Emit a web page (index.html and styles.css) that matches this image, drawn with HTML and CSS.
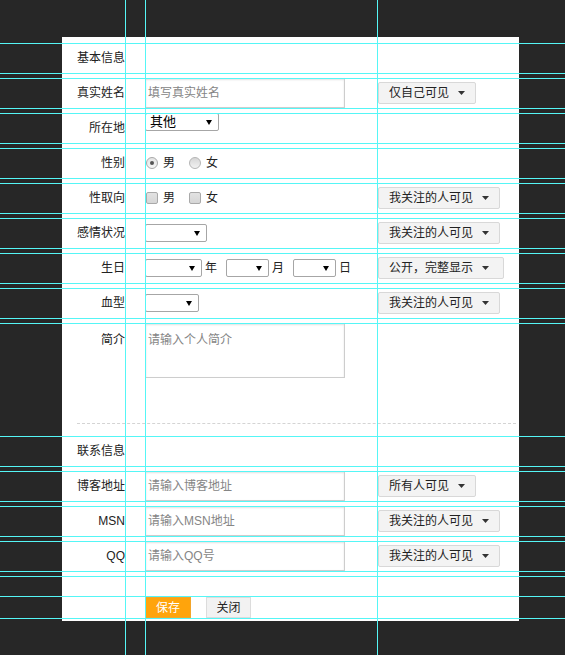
FILE: index.html
```html
<!DOCTYPE html>
<html lang="zh-CN">
<head>
<meta charset="utf-8">
<title>个人资料</title>
<link rel="stylesheet" href="styles.css">
</head>
<body>
<div class="page">
  <div class="panel">
    <div class="row"><div class="label">基本信息</div></div>

    <div class="row">
      <div class="label">真实姓名</div>
      <div class="field"><div class="input">填写真实姓名</div></div>
      <div class="vis">仅自己可见<svg class="caret" width="7" height="4" viewBox="0 0 7 4"><polygon points="0,0 7,0 3.5,4"/></svg></div>
    </div>

    <div class="row">
      <div class="label">所在地</div>
      <div class="field field-top"><div class="select sel-loc"><span>其他</span><span class="arrow"></span></div></div>
    </div>

    <div class="row">
      <div class="label">性别</div>
      <div class="field">
        <span class="radio on"></span><span class="opt">男</span>
        <span class="radio"></span><span class="opt">女</span>
      </div>
    </div>

    <div class="row">
      <div class="label">性取向</div>
      <div class="field">
        <span class="check"></span><span class="opt">男</span>
        <span class="check"></span><span class="opt">女</span>
      </div>
      <div class="vis">我关注的人可见<svg class="caret" width="7" height="4" viewBox="0 0 7 4"><polygon points="0,0 7,0 3.5,4"/></svg></div>
    </div>

    <div class="row">
      <div class="label">感情状况</div>
      <div class="field"><div class="select sel-emo"><span class="arrow"></span></div></div>
      <div class="vis">我关注的人可见<svg class="caret" width="7" height="4" viewBox="0 0 7 4"><polygon points="0,0 7,0 3.5,4"/></svg></div>
    </div>

    <div class="row">
      <div class="label">生日</div>
      <div class="field">
        <div class="select sel-year"><span class="arrow"></span></div><span class="unit">年</span>
        <div class="select sel-md"><span class="arrow"></span></div><span class="unit">月</span>
        <div class="select sel-md"><span class="arrow"></span></div><span class="unit">日</span>
      </div>
      <div class="vis vis-wide">公开，完整显示<svg class="caret" width="7" height="4" viewBox="0 0 7 4"><polygon points="0,0 7,0 3.5,4"/></svg></div>
    </div>

    <div class="row">
      <div class="label">血型</div>
      <div class="field"><div class="select sel-blood"><span class="arrow"></span></div></div>
      <div class="vis">我关注的人可见<svg class="caret" width="7" height="4" viewBox="0 0 7 4"><polygon points="0,0 7,0 3.5,4"/></svg></div>
    </div>

    <div class="row intro">
      <div class="label label-top">简介</div>
      <div class="field field-top"><div class="textarea">请输入个人简介</div></div>
    </div>

    <div class="divider"></div>

    <div class="row"><div class="label">联系信息</div></div>

    <div class="row">
      <div class="label">博客地址</div>
      <div class="field"><div class="input">请输入博客地址</div></div>
      <div class="vis">所有人可见<svg class="caret" width="7" height="4" viewBox="0 0 7 4"><polygon points="0,0 7,0 3.5,4"/></svg></div>
    </div>

    <div class="row">
      <div class="label">MSN</div>
      <div class="field"><div class="input">请输入MSN地址</div></div>
      <div class="vis">我关注的人可见<svg class="caret" width="7" height="4" viewBox="0 0 7 4"><polygon points="0,0 7,0 3.5,4"/></svg></div>
    </div>

    <div class="row">
      <div class="label">QQ</div>
      <div class="field"><div class="input">请输入QQ号</div></div>
      <div class="vis">我关注的人可见<svg class="caret" width="7" height="4" viewBox="0 0 7 4"><polygon points="0,0 7,0 3.5,4"/></svg></div>
    </div>

    <div class="row spacer"></div>

    <div class="row actions">
      <div class="label"></div>
      <div class="field field-bottom">
        <span class="btn btn-save">保存</span>
        <span class="btn btn-close">关闭</span>
      </div>
    </div>
  </div>
</div>

<div class="vguide vg-a"></div>
<div class="vguide vg-b"></div>
<div class="vguide vg-c"></div>
</body>
</html>
```

FILE: styles.css
```css
html, body {
  margin: 0;
  padding: 0;
}

body {
  width: 565px;
  height: 655px;
  overflow: hidden;
  position: relative;
  background: #272727;
  font-family: "Liberation Sans", "Noto Sans CJK SC", sans-serif;
  font-size: 12px;
  line-height: 16px;
  color: #222;
}

.page {
  padding: 37px 0 0 62px;
}

.panel {
  width: 457px;
  height: 584px;
  box-sizing: border-box;
  padding-top: 6px;
  background: #fff;
}

/* rows with guide lines */
.row {
  position: relative;
  display: flex;
  align-items: center;
  height: 30px;
  margin-bottom: 5px;
}

.row::before,
.row::after {
  content: "";
  position: absolute;
  left: -62px;
  width: 565px;
  height: 1px;
  background: #55f6f6;
  z-index: 3;
  top: 0;
}

.row::after {
  top: 30px;
}

.row.intro {
  height: 100px;
  margin-bottom: 0;
  align-items: flex-start;
}

.row.intro::after {
  display: none;
}

.row.spacer {
  height: 20px;
  margin-bottom: 0;
}

.row.spacer::after {
  top: 20px;
}

.row.actions {
  height: 22px;
  margin-bottom: 0;
}

.row.actions::after {
  top: 22px;
}

.label {
  flex: none;
  width: 63px;
  text-align: right;
  color: #222;
}

.label-top {
  padding-top: 9px;
}

.field {
  flex: none;
  width: 233px;
  margin-left: 20px;
  display: flex;
  align-items: center;
}

.field-top {
  align-self: flex-start;
}

.field-bottom {
  align-self: flex-end;
}

/* text inputs */
.input {
  width: 200px;
  height: 30px;
  box-sizing: border-box;
  border: 1px solid #cdcdcd;
  box-shadow: inset 0 1px 2px rgba(0, 0, 0, 0.12);
  padding-left: 2px;
  display: flex;
  align-items: center;
  color: #858585;
}

.textarea {
  width: 200px;
  height: 55px;
  box-sizing: border-box;
  border: 1px solid #cdcdcd;
  box-shadow: inset 0 1px 2px rgba(0, 0, 0, 0.12);
  padding: 8px 2px 0;
  color: #858585;
}

/* selects */
.select {
  height: 18px;
  box-sizing: border-box;
  border: 1px solid #a6a6a6;
  border-radius: 2px;
  background: #fff;
  display: flex;
  align-items: center;
  padding-left: 4px;
  font-size: 13px;
  color: #000;
}

.select .arrow {
  margin-left: auto;
  margin-right: 6px;
  width: 0;
  height: 0;
  border-left: 3px solid transparent;
  border-right: 3px solid transparent;
  border-top: 5px solid #000;
}

.sel-loc { width: 74px; }
.sel-emo { width: 62px; }
.sel-year { width: 57px; }
.sel-md { width: 43px; }
.sel-blood { width: 54px; }

.unit {
  margin-left: 3px;
  margin-right: 9px;
  color: #222;
}

/* radios & checkboxes */
.radio {
  flex: none;
  width: 12px;
  height: 12px;
  box-sizing: border-box;
  margin-left: 1px;
  border-radius: 50%;
  border: 1px solid #b4b4b4;
  background: linear-gradient(#d6d6d6, #f2f2f2);
  display: flex;
  align-items: center;
  justify-content: center;
}

.radio.on {
  border-color: #a8a8a8;
  background: linear-gradient(#e4e4e4, #f6f6f6);
}

.radio.on::after {
  content: "";
  width: 4px;
  height: 4px;
  border-radius: 50%;
  background: #555;
}

.check {
  flex: none;
  width: 12px;
  height: 12px;
  box-sizing: border-box;
  margin-left: 1px;
  border-radius: 2px;
  border: 1px solid #a9a9a9;
  background: linear-gradient(#e2e2e2, #d6d6d6);
}

.opt {
  margin-left: 5px;
  margin-right: 13px;
  color: #222;
}

/* visibility dropdown buttons */
.vis {
  flex: none;
  display: flex;
  align-items: center;
  height: 22px;
  box-sizing: border-box;
  padding: 0 10px;
  border: 1px solid #d8d8d8;
  border-radius: 2px;
  background: #f3f3f3;
  color: #222;
}

.vis-wide {
  padding-right: 14px;
}

.caret {
  display: block;
  margin-left: 9px;
  fill: #333;
}

/* divider */
.divider {
  margin: 0 3px 12px 15px;
  border-top: 1px dashed #d4d4d4;
}

/* buttons */
.btn {
  height: 21px;
  box-sizing: border-box;
  display: flex;
  align-items: center;
  justify-content: center;
  font-size: 12px;
}

.btn-save {
  width: 46px;
  background: #ffa40c;
  border: 1px solid #f3a52a;
  color: #fff;
}

.btn-close {
  width: 45px;
  margin-left: 15px;
  background: #f2f2f2;
  border: 1px solid #dcdcdc;
  color: #222;
}

/* vertical guides overlaying the canvas */
.vguide {
  position: absolute;
  top: 0;
  width: 1px;
  height: 655px;
  background: #55f6f6;
  z-index: 4;
}

.vg-a { left: 125px; }
.vg-b { left: 145px; }
.vg-c { left: 377px; }
```
